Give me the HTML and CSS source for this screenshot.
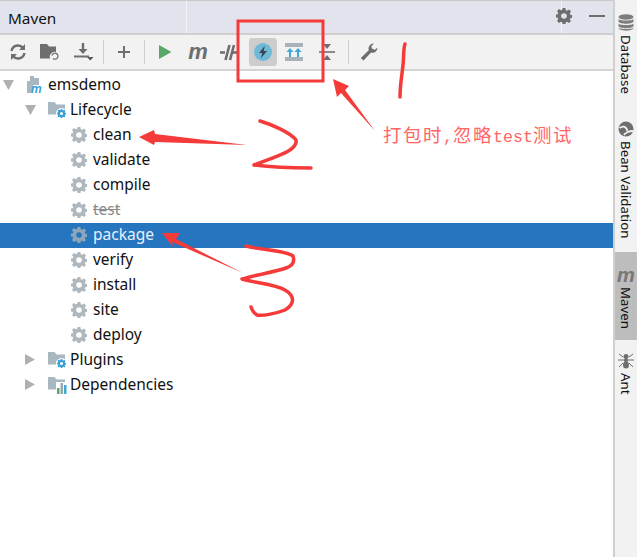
FILE: index.html
```html
<!DOCTYPE html>
<html lang="en">
<head>
<meta charset="utf-8">
<title>Maven</title>
<link rel="stylesheet" href="styles.css">
</head>
<body>
<svg class="defs" width="0" height="0">
  <defs>
    <symbol id="gear" viewBox="0 0 16 16">
      <path fill-rule="evenodd" d="M6.600 0h2.800l.4 2.200 1.300.55L13 1.500l2 2-1.250 1.900.55 1.300 2.200.4v2.800l-2.200.4-.55 1.300L15 13l-2 2-1.900-1.250-1.300.55-.4 2.200H6.600l-.4-2.200-1.300-.55L3 15l-2-2 1.250-1.900-.55-1.300L0 9.400V6.600l1.700-.4.55-1.300L1 3l2-2 1.900 1.250 1.300-.55zM8 5.200a2.800 2.800 0 1 0 0 5.600 2.800 2.800 0 0 0 0-5.600z"/>
    </symbol>
    <symbol id="folder" viewBox="0 0 18 16">
      <path d="M0 1h6.500l2 2.500H17v10H0z"/>
    </symbol>
  </defs>
</svg>
<div class="window">
  <main class="panel">
    <header class="titlebar">
      <div class="title">Maven</div>
      <div class="title-mid"></div>
      <div class="title-actions">
        <svg class="ico-gear-dark" width="16" height="16"><use href="#gear"/></svg>
        <span class="minimize"></span>
      </div>
    </header>
    <div class="toolbar">
      <span class="tool"><svg width="18" height="18" viewBox="0 0 18 18" fill="none" stroke="#6e6e6e" stroke-width="2.400"><path d="M2.500 8A6.500 6.500 0 0 1 14 5"/><path d="M15.500 10A6.500 6.500 0 0 1 4 13"/><path d="M16 1v6h-6zM2 17v-6h6z" fill="#6e6e6e" stroke="none"/></svg></span>
      <span class="tool"><svg width="20" height="18" viewBox="0 0 20 18"><path fill="#6e6e6e" d="M0 1h7l2 2.500h7V9a5 5 0 0 0-6 6.500H0z"/><path fill="none" stroke="#6e6e6e" stroke-width="1.300" d="M12 12.500a3 3 0 1 1 1 3"/></svg></span>
      <span class="tool"><svg width="20" height="18" viewBox="0 0 20 18" fill="#6e6e6e"><path d="M7.800 0h2.400v6h3.300L9 11 4.500 6h3.300z"/><rect x="0" y="12.500" width="15" height="2"/><path d="M13 14h6.500l-3.200 3.500z" fill="#555"/></svg></span>
      <span class="sep"></span>
      <span class="tool"><svg width="14" height="14" viewBox="0 0 14 14" fill="#6e6e6e"><path d="M6 1h2v5h5v2H8v5H6V8H1V6h5z"/></svg></span>
      <span class="sep"></span>
      <span class="tool"><svg width="14" height="16" viewBox="0 0 14 16"><path fill="#59a869" d="M1 1l12.500 7L1 15z"/></svg></span>
      <span class="tool tool-m">m</span>
      <span class="tool"><svg width="20" height="17" viewBox="0 0 20 17" fill="none" stroke="#6e6e6e" stroke-width="2.600"><path d="M1 8.500h5M14 8.500h5"/><path d="M10.500 1L6.500 16M15 1l-4 15"/></svg></span>
      <span class="tool tool-active"><svg width="20" height="20" viewBox="0 0 20 20"><circle cx="10" cy="10" r="9" fill="#6fb9d8"/><path fill="#37474f" d="M11.800 3.800L6 11h3.200l-1.300 5.200L14 9h-3.300z"/></svg></span>
      <span class="tool"><svg width="18" height="18" viewBox="0 0 18 18"><rect x="0" y="0" width="18" height="4" fill="#a8b2b9"/><rect x="0" y="14" width="18" height="4" fill="#a8b2b9"/><path fill="#40a8d8" d="M5 5l3.500 4H6v5H4V9H1.500zM13 5l3.500 4H14v5h-2V9H9.500z"/></svg></span>
      <span class="tool"><svg width="16" height="16" viewBox="0 0 16 16"><rect x="0" y="7" width="16" height="2" fill="#8a8a8a"/><path fill="#6e6e6e" d="M4 0h8L8 5zM4 16h8L8 11z"/></svg></span>
      <span class="sep sep-wide"></span>
      <span class="tool"><svg width="18" height="18" viewBox="0 0 18 18"><path fill="#6e6e6e" d="M17.500 4.500a5 5 0 0 1-6.500 5L3.500 17.500 .8 15l8-7.800A5 5 0 0 1 14 .6L11.200 3.500 12.500 6l2.500.8z"/></svg></span>
    </div>
    <div class="tree">
      <div class="row root"><span class="arrow"><svg width="11" height="10" viewBox="0 0 11 10"><path fill="#b0b0b0" d="M0 0h11L5.500 10z"/></svg></span><span class="icon"><svg class="root-icon" width="18" height="20" viewBox="0 0 18 20"><path fill="#a9b7c1" d="M1 6h3V1h4v2h5v7H7v8H1z"/><text x="5" y="18" class="m-badge">m</text></svg></span>emsdemo</div>
      <div class="row branch"><span class="arrow"><svg width="11" height="10" viewBox="0 0 11 10"><path fill="#b0b0b0" d="M0 0h11L5.500 10z"/></svg></span><span class="icon"><svg width="19" height="18" viewBox="0 0 19 18"><use href="#folder" class="fold" width="18" height="16"/><circle cx="13.500" cy="12.500" r="5.500" fill="#fff"/><use href="#gear" class="gear-blue" x="9" y="8" width="9" height="9"/></svg></span>Lifecycle</div>
      <div class="row goal"><span class="icon-goal"><svg width="16" height="16"><use href="#gear" class="gear-grey"/></svg></span>clean</div>
      <div class="row goal"><span class="icon-goal"><svg width="16" height="16"><use href="#gear" class="gear-grey"/></svg></span>validate</div>
      <div class="row goal"><span class="icon-goal"><svg width="16" height="16"><use href="#gear" class="gear-grey"/></svg></span>compile</div>
      <div class="row goal skipped"><span class="icon-goal"><svg width="16" height="16"><use href="#gear" class="gear-grey"/></svg></span><s>test</s></div>
      <div class="row goal selected"><span class="icon-goal"><svg width="16" height="16"><use href="#gear" class="gear-sel"/></svg></span>package</div>
      <div class="row goal"><span class="icon-goal"><svg width="16" height="16"><use href="#gear" class="gear-grey"/></svg></span>verify</div>
      <div class="row goal"><span class="icon-goal"><svg width="16" height="16"><use href="#gear" class="gear-grey"/></svg></span>install</div>
      <div class="row goal"><span class="icon-goal"><svg width="16" height="16"><use href="#gear" class="gear-grey"/></svg></span>site</div>
      <div class="row goal"><span class="icon-goal"><svg width="16" height="16"><use href="#gear" class="gear-grey"/></svg></span>deploy</div>
      <div class="row branch"><span class="arrow"><svg width="10" height="11" viewBox="0 0 10 11"><path fill="#b0b0b0" d="M0 0l10 5.500L0 11z"/></svg></span><span class="icon"><svg width="19" height="18" viewBox="0 0 19 18"><use href="#folder" class="fold" width="18" height="16"/><circle cx="13.500" cy="12.500" r="5.500" fill="#fff"/><use href="#gear" class="gear-blue" x="9" y="8" width="9" height="9"/></svg></span>Plugins</div>
      <div class="row branch"><span class="arrow"><svg width="10" height="11" viewBox="0 0 10 11"><path fill="#b0b0b0" d="M0 0l10 5.500L0 11z"/></svg></span><span class="icon"><svg width="19" height="18" viewBox="0 0 19 18"><use href="#folder" class="fold" width="18" height="16"/><rect x="8" y="6" width="11" height="12" fill="#fff"/><rect x="9" y="12" width="2.500" height="6" fill="#59a869"/><rect x="12.500" y="7" width="2.500" height="11" fill="#9aa7b0"/><rect x="16" y="9" width="2.500" height="9" fill="#40a8d8"/></svg></span>Dependencies</div>
    </div>
  </main>
  <aside class="strip">
    <div class="tab tab-db">
      <svg width="16" height="17" viewBox="0 0 16 17" fill="#7d7d7d"><ellipse cx="8" cy="3" rx="7.500" ry="2.800"/><path d="M.5 5c1 2 14 2 15 0v2.500c-1 3-14 3-15 0zM.5 9.500c1 2 14 2 15 0V12c-1 3-14 3-15 0zM.5 13.500c1 2 14 2 15 0V14c-1 3.500-14 3.500-15 0z"/></svg>
      <span class="tab-label">Database</span>
    </div>
    <div class="tab tab-bean">
      <svg width="16" height="16" viewBox="0 0 16 16"><circle cx="8" cy="8" r="7.500" fill="#6e6e6e"/><path fill="none" stroke="#f2f2f2" stroke-width="1.800" d="M1.500 7c4-3 7-1 8 3M6 14c1-2 5-4 9-4"/></svg>
      <span class="tab-label">Bean Validation</span>
    </div>
    <div class="tab tab-maven">
      <span class="tab-m">m</span>
      <span class="tab-label">Maven</span>
    </div>
    <div class="tab tab-ant">
      <svg width="16" height="16" viewBox="0 0 16 16" fill="#6e6e6e" stroke="#6e6e6e"><circle cx="8" cy="3.500" r="2.500" stroke="none"/><circle cx="8" cy="7.500" r="2" stroke="none"/><ellipse cx="8" cy="12" rx="3" ry="3.500" stroke="none"/><path fill="none" stroke-width="1" d="M1 1l4 3M15 1l-4 3M0 7h16M1 14l4-4M15 14l-4-4"/></svg>
      <span class="tab-label">Ant</span>
    </div>
  </aside>
</div>
<svg class="marks" width="637" height="557" viewBox="0 0 637 557">
  <rect x="238" y="21" width="85" height="60" fill="none" stroke="#f53a3a" stroke-width="3"/>
  <g fill="#f53a3a">
    <path d="M333 79L349 86 345 90 375 131 341 93 337 97z"/>
    <path d="M139 137L154 130 155 134 247 145 155 142 154 145z"/>
    <path d="M162 233L180 233 176 239 243 273 172 242 173 247z"/>
  </g>
  <g fill="none" stroke="#f53a3a" stroke-width="3.500" stroke-linecap="round" stroke-linejoin="round">
    <path d="M405 44C403 50 404 58 403 65C402 75 400 85 400 97"/>
    <path d="M260 121C270 124 290 132 296 140C298 150 280 155 254 165C270 167 295 168 311 168"/>
    <path d="M246 246C260 250 285 250 293 256C295 262 292 266 286 268C275 272 255 275 242 279C255 283 275 284 285 290C295 296 295 304 285 310C275 314 262 316 257 315C254 313 252 310 251 307"/>
  </g>
</svg>
<div class="note">打包时<span class="note-latin">,</span>忽略<span class="note-latin">test</span>测试</div>
</body>
</html>
```
FILE: styles.css
```css
* { box-sizing: border-box; }
html, body { margin: 0; padding: 0; }
body {
  width: 637px;
  height: 557px;
  overflow: hidden;
  position: relative;
  background: #fff;
  font-family: "Noto Sans", "Open Sans", sans-serif;
  color: #111;
}
.defs { position: absolute; }
.window { display: flex; height: 557px; }
.panel { width: 613px; display: flex; flex-direction: column; }

.titlebar {
  height: 35px;
  display: flex;
  background: #e1e4ec;
  border-top: 1px solid #c9c9c9;
  border-bottom: 2px solid #d0d0d0;
}
.title { width: 187px; padding: 0 0 0 8px; border-right: 1px solid #f2f4f8; font-size: 15.300px; line-height: 34px; }
.title-mid { width: 375px; border-right: 1px solid #f2f4f8; }
.title-actions { flex: 1; display: flex; align-items: center; gap: 17px; margin-left: -6px; padding: 0 0 2px 0; }
.ico-gear-dark { fill: #6e6e6e; }
.minimize { width: 16px; height: 2px; background: #6e6e6e; }

.toolbar {
  height: 36px;
  padding-left: 2px;
  display: grid;
  grid-template-columns: 32px 32px 36px 2px 40px 1px 40px 26px 36px 32px 30px 36px 6px 36px;
  align-items: center;
  justify-items: center;
  background: #f2f2f2;
  border-bottom: 2px solid #d4d4d4;
}
.tool { display: flex; align-items: center; justify-content: center; }
.tool-m { font: italic bold 22px/1 "Liberation Sans", sans-serif; color: #6e6e6e; }
.tool-active { width: 28px; height: 28px; background: #cdcdcd; border-radius: 3px; }
.sep { width: 1px; height: 24px; background: #cfcfcf; }
.sep-wide { width: 1px; }

.tree { flex: 1; padding-top: 2px; background: #fff; }
.row { height: 25px; padding-bottom: 2px; display: flex; align-items: center; font-size: 15.500px; line-height: 23px; color: #111; white-space: nowrap; }
.root { padding-left: 2px; }
.branch { padding-left: 24px; }
.goal { padding-left: 71px; }
.arrow { width: 24px; padding-left: 1px; display: flex; align-items: center; }
.icon { width: 22px; display: flex; align-items: center; }
.icon-goal { width: 22px; display: flex; align-items: center; }
.root-icon { overflow: visible; }
.fold { fill: #a9b7c1; }
.gear-blue { fill: #389fd6; }
.gear-grey { fill: #afb8be; }
.gear-sel { fill: #8fa5b8; }
.m-badge { font: italic bold 12px "Liberation Sans", sans-serif; fill: #389fd6; }
.skipped { color: #8a8a8a; }
.selected { background: #2675bf; color: #e8f1fa; }

.strip {
  width: 24px;
  background: #f2f2f2;
  border-left: 2px solid #d0d0d0;
  display: flex;
  flex-direction: column;
}
.tab { display: flex; flex-direction: column; align-items: center; gap: 4px; font-size: 13.300px; }
.tab-label { writing-mode: vertical-rl; line-height: 20px; color: #111; }
.tab-db { height: 112px; padding-top: 14px; }
.tab-bean { height: 140px; padding-top: 9px; }
.tab-maven { height: 88px; padding-top: 15px; background: #bdbdbd; }
.tab-ant { padding-top: 13px; }
.tab-m { font: italic bold 20px/16px "Liberation Sans", sans-serif; color: #777; }

.marks { position: absolute; left: 0; top: 0; pointer-events: none; }
.note {
  position: absolute;
  left: 383px;
  top: 121px;
  font-family: "Noto Sans CJK SC", sans-serif;
  font-size: 18.500px;
  letter-spacing: 1.500px;
  line-height: 26px;
  color: #f66;
  white-space: nowrap;
}
.note-latin { font-family: "Liberation Mono", monospace; font-size: 16.670px; letter-spacing: 0; }
```
